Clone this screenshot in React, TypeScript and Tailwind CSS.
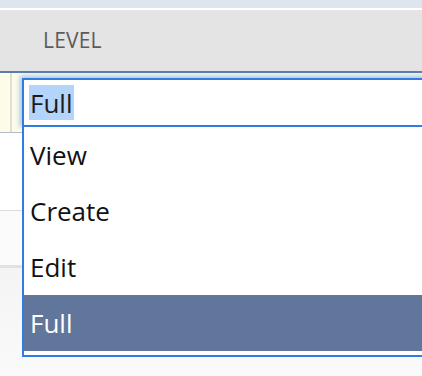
import React from "react";

const levels = ["View", "Create", "Edit", "Full"];

export default function App() {
  const selected = "Full";

  return (
    <div
      className="relative w-[422px] h-[376px] overflow-hidden bg-[#f6f6f6] flex flex-col"
      style={{ fontFamily: '"Open Sans", "Noto Sans", sans-serif' }}
    >
      <div className="h-[8px] shrink-0 bg-[#dfe5ee]" />
      <div className="h-[2px] shrink-0 bg-white" />
      <div className="h-[61px] shrink-0 bg-[#e4e4e4] flex items-center pl-[43px]">
        <span className="text-[21px] text-[#5c5c5c] tracking-[0.2px]">LEVEL</span>
      </div>
      <div className="h-[2px] shrink-0 bg-[#5b7bab]" />

      {/* row being edited */}
      <div className="h-[59px] shrink-0 bg-[#fdfce8] flex">
        <div className="w-[10px] shrink-0" />
        <div className="w-[2px] shrink-0 bg-[#dedfd8]" />
      </div>
      <div className="h-[1px] shrink-0 bg-[#b3bccb]" />

      <div className="h-[78px] shrink-0 bg-white border-b border-[#dcdcdc]" />
      <div className="h-[57px] shrink-0 bg-[#fbfbfb] border-b-[3px] border-[#e2e2e2]" />
      <div className="flex-1 bg-gradient-to-b from-[#f4f4f4] to-[#fafafa]" />

      {/* select input */}
      <div className="absolute left-[22px] top-[78px] w-[440px] h-[47px] bg-white border-2 border-b-0 border-[#2f7de1] shadow-[0_0_5px_2px_rgba(120,170,235,0.7)] flex items-center pl-[6px]">
        <span className="h-[35px] px-[1px] -ml-[1px] flex items-center bg-[#b4d5fb] text-[26px] leading-none text-[#1c1c1c]">
          {selected}
        </span>
      </div>

      {/* options list */}
      <ul className="absolute left-[22px] top-[125px] w-[440px] bg-white border-2 border-[#2f7de1] pb-[4px]">
        {levels.map((level) => (
          <li
            key={level}
            className={
              level === selected
                ? "h-[56px] flex items-center pl-[6px] bg-[#60769a] text-white text-[26px] leading-none"
                : "h-[56px] flex items-center pl-[6px] text-[#111] text-[26px] leading-none"
            }
          >
            {level}
          </li>
        ))}
      </ul>
    </div>
  );
}
